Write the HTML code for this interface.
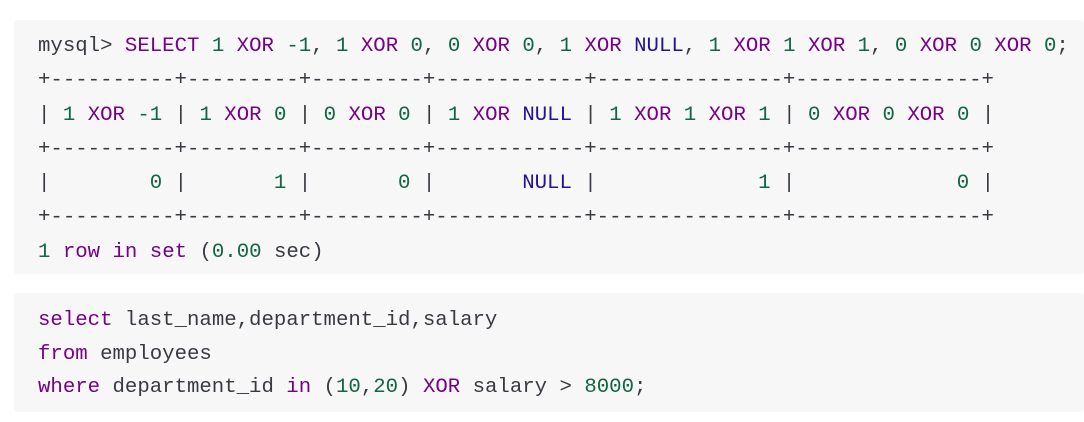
<!DOCTYPE html>
<html><head><meta charset="utf-8"><style>
body{margin:0;background:#fff;width:1084px;height:422px;overflow:hidden}
pre{position:absolute;left:14px;width:1070px;margin:0;background:#f7f7f7;border-radius:3px;padding:0 0 0 24px;font-family:"Liberation Mono",monospace;font-size:20.7px;line-height:34.3px;color:#383a42;white-space:pre;box-sizing:border-box}
.k{color:#770088}.n{color:#116644}.a{color:#221199}
</style></head><body>
<pre style="top:20px;height:254px;padding-top:10px">mysql&gt; <span class="k">SELECT</span> <span class="n">1</span> <span class="k">XOR</span> <span class="n">-1</span>, <span class="n">1</span> <span class="k">XOR</span> <span class="n">0</span>, <span class="n">0</span> <span class="k">XOR</span> <span class="n">0</span>, <span class="n">1</span> <span class="k">XOR</span> <span class="a">NULL</span>, <span class="n">1</span> <span class="k">XOR</span> <span class="n">1</span> <span class="k">XOR</span> <span class="n">1</span>, <span class="n">0</span> <span class="k">XOR</span> <span class="n">0</span> <span class="k">XOR</span> <span class="n">0</span>;
+----------+---------+---------+------------+---------------+---------------+
| <span class="n">1</span> <span class="k">XOR</span> <span class="n">-1</span> | <span class="n">1</span> <span class="k">XOR</span> <span class="n">0</span> | <span class="n">0</span> <span class="k">XOR</span> <span class="n">0</span> | <span class="n">1</span> <span class="k">XOR</span> <span class="a">NULL</span> | <span class="n">1</span> <span class="k">XOR</span> <span class="n">1</span> <span class="k">XOR</span> <span class="n">1</span> | <span class="n">0</span> <span class="k">XOR</span> <span class="n">0</span> <span class="k">XOR</span> <span class="n">0</span> |
+----------+---------+---------+------------+---------------+---------------+
|        <span class="n">0</span> |       <span class="n">1</span> |       <span class="n">0</span> |       <span class="a">NULL</span> |             <span class="n">1</span> |             <span class="n">0</span> |
+----------+---------+---------+------------+---------------+---------------+
<span class="n">1</span> <span class="k">row</span> <span class="k">in</span> <span class="k">set</span> (<span class="n">0.00</span> sec)</pre>
<pre style="top:293px;height:119px;padding-top:11px;line-height:33.5px"><span class="k">select</span> last_name,department_id,salary
<span class="k">from</span> employees
<span class="k">where</span> department_id <span class="k">in</span> (<span class="n">10</span>,<span class="n">20</span>) <span class="k">XOR</span> salary &gt; <span class="n">8000</span>;</pre>
</body></html>
